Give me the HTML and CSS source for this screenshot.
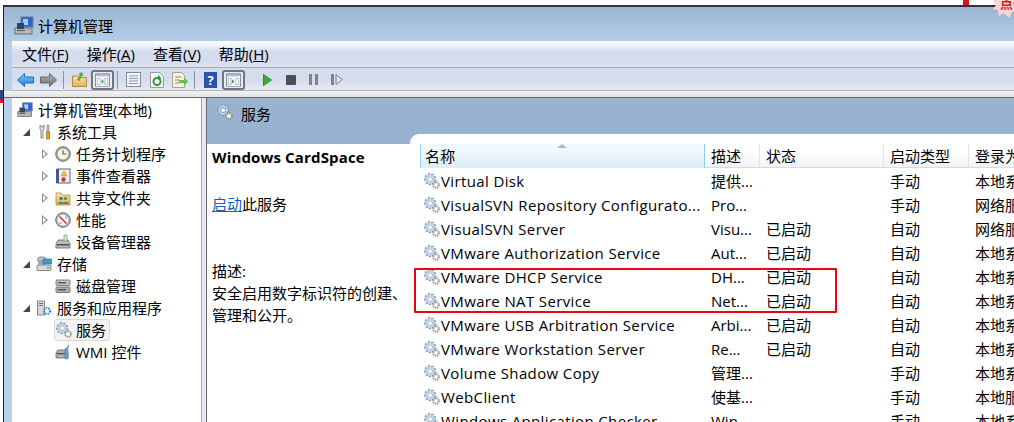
FILE: index.html
```html
<!DOCTYPE html>
<html lang="zh-CN">
<head>
<meta charset="utf-8">
<title>计算机管理</title>
<link rel="stylesheet" href="styles.css">
</head>
<body>
<svg class="defs" width="0" height="0" aria-hidden="true">
  <defs>
    <linearGradient id="gblue" x1="0" y1="0" x2="0" y2="1"><stop offset="0" stop-color="#7fd0fa"/><stop offset="1" stop-color="#1477d4"/></linearGradient>
    <linearGradient id="ggray" x1="0" y1="0" x2="0" y2="1"><stop offset="0" stop-color="#b4b4b4"/><stop offset="1" stop-color="#6f6f6f"/></linearGradient>
    <linearGradient id="gfolder" x1="0" y1="0" x2="0" y2="1"><stop offset="0" stop-color="#fbe6a8"/><stop offset="1" stop-color="#e0b35a"/></linearGradient>
    <symbol id="gear" viewBox="0 0 16 16">
      <circle cx="6.200" cy="6.200" r="4.800" fill="none" stroke="#7f97b2" stroke-width="2.600" stroke-dasharray="2 1.300"/>
      <circle cx="6.200" cy="6.200" r="3.900" fill="none" stroke="#bcd0e4" stroke-width="1.900"/>
      <circle cx="6.200" cy="6.200" r="2.300" fill="#fff" stroke="#7f93a8" stroke-width=".7"/>
      <circle cx="12" cy="12" r="2.800" fill="#fff" stroke="#85878a" stroke-width="2" stroke-dasharray="1.300 .9"/>
      <circle cx="12" cy="12" r="1" fill="#fff"/>
    </symbol>
    <symbol id="computer" viewBox="0 0 20 20">
      <rect x="7" y="1" width="12" height="10" fill="#2f62d8" stroke="#6d7f96"/>
      <rect x="9" y="3" width="5" height="6" fill="#9fd0ff"/>
      <rect x="1" y="12" width="17" height="6" fill="#b4b7ba" stroke="#6c6f73"/>
      <rect x="3" y="7" width="7" height="6" fill="#31465e"/>
      <rect x="3" y="14" width="8" height="1" fill="#54585c"/>
    </symbol>
    <symbol id="tools" viewBox="0 0 16 16">
      <path d="M4 1v4l1 1v8h2V6l1-1V1L6.500 3.500z" fill="#e9e9e9" stroke="#6f6f6f" stroke-width=".8"/>
      <path d="M11 1h2v7h-2z" fill="#c9c9c9" stroke="#777" stroke-width=".6"/>
      <path d="M10.500 8h3v7h-3z" fill="#e9a41c" stroke="#8a5a0c" stroke-width=".6"/>
    </symbol>
    <symbol id="clock" viewBox="0 0 16 16">
      <circle cx="8" cy="8" r="7.300" fill="#a9acaf" stroke="#6f7275"/>
      <circle cx="8" cy="8" r="5.300" fill="#fbf6e4"/>
      <path d="M8 4v4h3.500" fill="none" stroke="#6b6248" stroke-width="1.200"/>
    </symbol>
    <symbol id="book" viewBox="0 0 16 16">
      <rect x="2" y="1" width="13" height="14" fill="#eef0f6" stroke="#55617a"/>
      <rect x="1" y="1" width="3" height="14" fill="#4a5c84"/>
      <path d="M9 3l3 5H6z" fill="#f4c52a" stroke="#9a7a10" stroke-width=".5"/>
      <circle cx="8.500" cy="11.500" r="2.200" fill="#d2352c"/>
    </symbol>
    <symbol id="share" viewBox="0 0 16 16">
      <path d="M1 3h5l1 2h8v10H1z" fill="url(#gfolder)" stroke="#b48c3c" stroke-width=".8"/>
      <circle cx="6" cy="8.500" r="1.800" fill="#3d7fa8"/>
      <circle cx="10.500" cy="8.500" r="1.800" fill="#4f9d58"/>
      <path d="M3 14c0-3 6-3 6 0zM8 14c0-3 6-3 6 0z" fill="#4e8a76"/>
    </symbol>
    <symbol id="perf" viewBox="0 0 16 16">
      <circle cx="8" cy="8" r="7.300" fill="#b4b6b8" stroke="#6f7275"/>
      <circle cx="8" cy="8" r="5.300" fill="#fbfbfb"/>
      <path d="M4.500 4.500l7 7" stroke="#cf2a20" stroke-width="1.500"/>
      <path d="M11 4v3M4 11h3" stroke="#777" stroke-width=".8"/>
    </symbol>
    <symbol id="device" viewBox="0 0 16 16">
      <path d="M3 6h10l2 4v4H1v-4z" fill="#b9bcc0" stroke="#5f6368" stroke-width=".8"/>
      <rect x="2" y="10" width="12" height="1.500" fill="#4f5357"/>
      <rect x="9" y="1" width="3" height="6" fill="#dfe8df" stroke="#6d8a6d" stroke-width=".6"/>
    </symbol>
    <symbol id="storage" viewBox="0 0 16 16">
      <ellipse cx="6" cy="3.500" rx="4.500" ry="2.500" fill="#c4c6c8" stroke="#6b6e72" stroke-width=".8"/>
      <rect x="1" y="9" width="14" height="5.500" rx="1" fill="#d9dadb" stroke="#6b6e72" stroke-width=".8"/>
      <rect x="2" y="4" width="8" height="5" fill="#a6a9ac"/>
      <rect x="7" y="3" width="8.500" height="5" fill="#3c9bd6" stroke="#2a6f9f" stroke-width=".6"/>
      <rect x="11" y="11" width="2.500" height="1.500" fill="#58b24c"/>
    </symbol>
    <symbol id="disk" viewBox="0 0 16 16">
      <rect x="1" y="2" width="14" height="5.500" rx="1" fill="#c2c4c6" stroke="#5f6368" stroke-width=".8"/>
      <rect x="1" y="9" width="14" height="5.500" rx="1" fill="#aeb0b3" stroke="#5f6368" stroke-width=".8"/>
      <rect x="3" y="4" width="8" height="1.500" fill="#54585c"/>
      <rect x="3" y="11" width="8" height="1.500" fill="#54585c"/>
    </symbol>
    <symbol id="apps" viewBox="0 0 16 16">
      <rect x="1.500" y="1" width="7" height="14" fill="#d6d8da" stroke="#6c7075" stroke-width=".8"/>
      <path d="M3 3.500h4M3 5.500h4" stroke="#6c7075"/>
      <circle cx="11" cy="11" r="3" fill="none" stroke="#3f86c8" stroke-width="2.200" stroke-dasharray="1.500 1"/>
      <circle cx="11" cy="11" r="1" fill="#fff"/>
    </symbol>
    <symbol id="wmi" viewBox="0 0 16 16">
      <path d="M3 6h8l2 3v5H1V9z" fill="#aeb2b6" stroke="#5f6368" stroke-width=".8"/>
      <rect x="2" y="9" width="8" height="1.300" fill="#4f5357"/>
      <rect x="10" y="4" width="3" height="11" rx="1.500" fill="#5da7dc" stroke="#386f9c" stroke-width=".6"/>
      <path d="M12 4l2-3" stroke="#777" stroke-width="1.200"/>
    </symbol>
    <symbol id="panel" viewBox="0 0 20 18">
      <rect x=".5" y=".5" width="19" height="17" fill="#f6f7f9" stroke="#667080"/>
      <rect x="1" y="1" width="18" height="3" fill="#a9b8cc"/>
      <path d="M3 7h4v8H3zM13 7h4v8h-4z" fill="#fff" stroke="#7c8794" stroke-width=".7"/>
    </symbol>
  </defs>
</svg>

<div class="strip-mark"></div>
<svg class="burst" width="24" height="20" viewBox="0 0 24 20" aria-hidden="true">
  <path d="M1 0l3 5-3 4 5 1 1 6 5-3 5 5 3-6 5-1V0z" fill="#f7d6d2"/>
</svg>
<span class="burst-text">点击</span>
<div class="desk-blue"></div>
<div class="desk-red"></div>

<main class="window">
  <header class="titlebar">
    <svg class="i20"><use href="#computer"/></svg>
    <span>计算机管理</span>
  </header>

  <nav class="menubar">
    <span>文件(<u>F</u>)</span>
    <span>操作(<u>A</u>)</span>
    <span>查看(<u>V</u>)</span>
    <span>帮助(<u>H</u>)</span>
  </nav>

  <div class="toolbar">
    <span class="tb"><svg width="17" height="14" viewBox="0 0 17 14"><path d="M7.500.5v3.500h9v6h-9v3.500L.5 7z" fill="url(#gblue)" stroke="#1a6fb8"/></svg></span>
    <span class="tb"><svg width="17" height="14" viewBox="0 0 17 14"><path d="M9.500.5v3.500h-9v6h9v3.500L16.500 7z" fill="url(#ggray)" stroke="#666"/></svg></span>
    <span class="sep"></span>
    <span class="tb"><svg width="15" height="15" viewBox="0 0 15 15"><path d="M.5 4h5l1 1.500h8v9H.5z" fill="url(#gfolder)" stroke="#b48c3c"/><path d="M5 8l3-5-2-.5L10 0l1.500 4-1.500-.8L7.500 9z" fill="#4fae3a"/></svg></span>
    <span class="tb on"><svg width="15" height="14" viewBox="0 0 20 18"><use href="#panel"/><path d="M11 8v6l-3-3z" fill="#2f9a3a"/></svg></span>
    <span class="sep"></span>
    <span class="tb"><svg width="15" height="15" viewBox="0 0 15 15"><rect x=".5" y=".5" width="14" height="14" fill="#f2f4f7" stroke="#838b96"/><path d="M3 4h9M3 6.500h9M3 9h9M3 11.500h9" stroke="#8f99a6"/></svg></span>
    <span class="tb"><svg width="14" height="16" viewBox="0 0 14 16"><path d="M.5.500h9l4 4v11H.5z" fill="#f8f8f8" stroke="#9a9a9a"/><circle cx="7" cy="9.500" r="3.500" fill="none" stroke="#2e9a3c" stroke-width="2"/><path d="M8 3l3.500 3L8 8z" fill="#2e9a3c"/></svg></span>
    <span class="tb"><svg width="16" height="16" viewBox="0 0 16 16"><path d="M.5.500h9l3 3v12H.5z" fill="#f6f2dc" stroke="#a5a08a"/><path d="M3 5h6M3 8h4M3 11h4" stroke="#8d8a78"/><path d="M7 8h5V5l4 4.500-4 4.500v-3H7z" fill="#6bbb4f"/></svg></span>
    <span class="sep"></span>
    <span class="tb"><span class="help">?</span></span>
    <span class="tb on"><svg width="15" height="14" viewBox="0 0 20 18"><use href="#panel"/><path d="M8 8v6l3-3z" fill="#2f9a3a"/></svg></span>
    <span class="sep wide"></span>
    <span class="tb"><svg width="9" height="12" viewBox="0 0 9 12"><path d="M.5.500L8.500 6 .5 11.500z" fill="#3cab35" stroke="#2a8a28"/></svg></span>
    <span class="tb"><span class="stop"></span></span>
    <span class="tb"><svg width="9" height="11" viewBox="0 0 9 11"><path d="M0 0h3v11H0zM6 0h3v11H6z" fill="#7f8387"/></svg></span>
    <span class="tb"><svg width="12" height="11" viewBox="0 0 12 11"><path d="M0 0h3v11H0z" fill="#7f8387"/><path d="M5 .500L11.500 5.500 5 10.500z" fill="#dfe1e3" stroke="#7f8387"/></svg></span>
  </div>
  <div class="rule"></div>

  <div class="content">
    <aside class="tree">
      <div class="node lv0"><svg class="i16"><use href="#computer"/></svg>计算机管理(本地)</div>
      <div class="node lv1"><i class="tw open"></i><svg class="i16"><use href="#tools"/></svg>系统工具</div>
      <div class="node lv2"><i class="tw"></i><svg class="i16"><use href="#clock"/></svg>任务计划程序</div>
      <div class="node lv2"><i class="tw"></i><svg class="i16"><use href="#book"/></svg>事件查看器</div>
      <div class="node lv2"><i class="tw"></i><svg class="i16"><use href="#share"/></svg>共享文件夹</div>
      <div class="node lv2"><i class="tw"></i><svg class="i16"><use href="#perf"/></svg>性能</div>
      <div class="node lv2"><i class="tw none"></i><svg class="i16"><use href="#device"/></svg>设备管理器</div>
      <div class="node lv1"><i class="tw open"></i><svg class="i16"><use href="#storage"/></svg>存储</div>
      <div class="node lv2"><i class="tw none"></i><svg class="i16"><use href="#disk"/></svg>磁盘管理</div>
      <div class="node lv1"><i class="tw open"></i><svg class="i16"><use href="#apps"/></svg>服务和应用程序</div>
      <div class="node lv2"><i class="tw none"></i><span class="picked"><svg class="i16"><use href="#gear"/></svg>服务</span></div>
      <div class="node lv2"><i class="tw none"></i><svg class="i16"><use href="#wmi"/></svg>WMI 控件</div>
    </aside>

    <section class="pane">
      <div class="pane-head"><svg class="i16"><use href="#gear"/></svg><span>服务</span></div>
      <div class="pane-body">
        <div class="detail">
          <h1>Windows CardSpace</h1>
          <p class="action"><a href="#">启动</a>此服务</p>
          <p class="desc">描述:<br>安全启用数字标识符的创建、<br>管理和公开。</p>
        </div>
        <div class="list">
          <div class="row head">
            <span class="sorted">名称<i class="sort"></i></span><span>描述</span><span>状态</span><span>启动类型</span><span>登录为</span>
          </div>
          <div class="row"><span><svg class="i16"><use href="#gear"/></svg>Virtual Disk</span><span>提供...</span><span></span><span>手动</span><span>本地系统</span></div>
          <div class="row"><span><svg class="i16"><use href="#gear"/></svg>VisualSVN Repository Configurato...</span><span>Pro...</span><span></span><span>手动</span><span>网络服务</span></div>
          <div class="row"><span><svg class="i16"><use href="#gear"/></svg>VisualSVN Server</span><span>Visu...</span><span>已启动</span><span>自动</span><span>网络服务</span></div>
          <div class="row"><span><svg class="i16"><use href="#gear"/></svg>VMware Authorization Service</span><span>Aut...</span><span>已启动</span><span>自动</span><span>本地系统</span></div>
          <div class="row"><span><svg class="i16"><use href="#gear"/></svg>VMware DHCP Service</span><span>DH...</span><span>已启动</span><span>自动</span><span>本地系统</span></div>
          <div class="row"><span><svg class="i16"><use href="#gear"/></svg>VMware NAT Service</span><span>Net...</span><span>已启动</span><span>自动</span><span>本地系统</span></div>
          <div class="row"><span><svg class="i16"><use href="#gear"/></svg>VMware USB Arbitration Service</span><span>Arbi...</span><span>已启动</span><span>自动</span><span>本地系统</span></div>
          <div class="row"><span><svg class="i16"><use href="#gear"/></svg>VMware Workstation Server</span><span>Re...</span><span>已启动</span><span>自动</span><span>本地系统</span></div>
          <div class="row"><span><svg class="i16"><use href="#gear"/></svg>Volume Shadow Copy</span><span>管理...</span><span></span><span>手动</span><span>本地系统</span></div>
          <div class="row"><span><svg class="i16"><use href="#gear"/></svg>WebClient</span><span>使基...</span><span></span><span>手动</span><span>本地服务</span></div>
          <div class="row"><span><svg class="i16"><use href="#gear"/></svg>Windows Application Checker</span><span>Win...</span><span></span><span>手动</span><span>本地系统</span></div>
        </div>
      </div>
    </section>
  </div>
</main>
<div class="callout"></div>
</body>
</html>
```
FILE: styles.css
```css
* { box-sizing: border-box; }
html, body { margin: 0; height: 422px; overflow: hidden; background: #fff; }
body {
  position: relative;
  padding: 5px 0 0 3px;
  font: 15px/22px "Open Sans", "Noto Sans CJK SC", sans-serif;
  color: #000;
}
.defs { position: absolute; }
svg { display: block; flex: none; }

.strip-mark { position: absolute; left: 963px; top: 0; width: 6px; height: 5px; background: #d4151c; }
.burst { position: absolute; left: 992px; top: 0; z-index: 2; }
.burst-text { position: absolute; left: 1000px; top: -4px; z-index: 3; font-size: 13px; line-height: 14px; font-weight: 700; color: #d21d1d; white-space: nowrap; }
.desk-blue { position: absolute; left: 0; top: 90px; width: 3px; height: 10px; background: #2c4a86; }
.desk-red { position: absolute; left: 0; top: 100px; width: 3px; height: 3px; background: #e8141c; }

.window {
  width: 1060px;
  height: 417px;
  border-left: 1px solid #222;
  border-top: 2px solid #333;
  background: #bad0e8;
  padding-left: 8px;
  display: flex;
  flex-direction: column;
}

.titlebar {
  height: 34px;
  margin-left: -8px;
  padding: 4px 0 0 10px;
  display: flex;
  align-items: center;
  gap: 4px;
  background: linear-gradient(#9ab4d1, #b3cee8);
}
.i20 { width: 20px; height: 20px; }
.i16 { width: 16px; height: 16px; }

.menubar {
  height: 27px;
  display: flex;
  gap: 18px;
  padding: 0 0 0 10px;
  align-items: center;
  background: linear-gradient(#fff 0, #f3f5fa 4px, #d5dcee 10px, #d5dcee 20px, #dfe4f2 26px);
  border-bottom: 1px solid #a9abb3;
}

.toolbar {
  height: 23px;
  display: flex;
  align-items: center;
  padding: 1px 0 0 2px;
  background: linear-gradient(#d5dcee, #d5dcee 55%, #e6eaf5);
  border-bottom: 1px solid #b0b2ba;
}
.tb { width: 23px; height: 21px; flex: none; display: flex; align-items: center; justify-content: center; }
.tb.on { height: 20px; border: 2px solid #6f7682; border-radius: 3px; background: #e9ecf4; }
.sep { width: 1px; height: 18px; flex: none; margin: 0 4px 0 3px; background: #8d939c; }
.sep.wide { background: transparent; margin: 0 5px; }
.help { width: 13px; height: 16px; background: #2b53ad; color: #fff; font-size: 13px; font-weight: 700; line-height: 16px; text-align: center; }
.stop { width: 10px; height: 10px; border-radius: 1px; background: #4c4f52; }

.rule { height: 7px; background: linear-gradient(#f2f2f2, #e4e4e4); border-bottom: 1px solid #666; margin-left: -8px; }

.content { flex: 1; display: flex; gap: 4px; min-height: 0; background: #e6e8ec; }

.tree {
  width: 190px;
  flex: none;
  background: #fff;
  border-right: 1px solid #a5a8ad;
  padding-top: 1px;
}
.node { height: 22px; display: flex; align-items: center; white-space: nowrap; gap: 5px; }
.lv0 { padding-left: 5px; }
.lv1 { padding-left: 10px; }
.lv2 { padding-left: 29px; }
.tw { width: 9px; flex: none; height: 10px; position: relative; }
.tw::before {
  content: "";
  position: absolute;
  left: 1px;
  top: 0;
  border-left: 6px solid #8a8f94;
  border-top: 5px solid transparent;
  border-bottom: 5px solid transparent;
}
.tw::after {
  content: "";
  position: absolute;
  left: 2px;
  top: 2px;
  border-left: 3px solid #fff;
  border-top: 3px solid transparent;
  border-bottom: 3px solid transparent;
}
.tw.open::before {
  left: 1px;
  top: 2px;
  border: 0;
  border-bottom: 7px solid #444;
  border-left: 7px solid transparent;
}
.tw.open::after, .tw.none::before, .tw.none::after { display: none; }
.picked {
  display: flex;
  align-items: center;
  gap: 4px;
  height: 22px;
  margin-left: -1px;
  padding: 0 3px 0 1px;
  background: #f3f3f3;
  border: 1px solid #d9d9d9;
  border-radius: 3px;
}

.pane { flex: 1; min-width: 0; display: flex; flex-direction: column; background: #fff; border-left: 1px solid #667; }
.pane-head {
  height: 46px;
  flex: none;
  background: #98b2cf;
  display: flex;
  align-items: flex-start;
  gap: 8px;
  padding: 5px 0 0 10px;
}
.pane-head svg { margin-top: 1px; }
.pane-body { flex: 1; display: flex; min-height: 0; }
.detail { width: 213px; flex: none; padding: 2px 0 0 5px; }
.detail h1 { margin: 0; font-size: 15px; line-height: 22px; font-weight: 700; white-space: nowrap; letter-spacing: .15px; }
.detail p { margin: 0; }
.action { padding-top: 25px; }
.action a { color: #0f62b8; text-decoration: underline; }
.desc { padding-top: 45px; }

.list { flex: 1; min-width: 0; margin: -10px 0 0 -10px; padding: 10px 0 0 10px; background: #fff; border-radius: 9px 0 0 0; }
.row {
  display: grid;
  grid-template-columns: 285px 55px 124px 85px 1fr;
  height: 24px;
  align-items: center;
  white-space: nowrap;
}
.row > span { overflow: hidden; padding-left: 6px; display: flex; align-items: center; gap: 1px; }
.row > span:first-child { padding-left: 4px; letter-spacing: .37px; }
.head { margin-bottom: 1px; border-bottom: 1px solid #d8dadd; background: linear-gradient(#fff, #fff 35%, #f0f2f5); }
.head > span { height: 24px; border-right: 1px solid #e1e3e6; }
.head > .sorted {
  position: relative;
  padding-left: 6px;
  letter-spacing: 0;
  background: linear-gradient(#f2f9fd, #f2f9fd 30%, #d9ecf8);
  border-left: 1px solid #a4cfe8;
  border-right: 1px solid #8fcdf0;
}
.sort {
  position: absolute;
  left: 136px;
  top: 0;
  border-left: 5px solid transparent;
  border-right: 5px solid transparent;
  border-bottom: 4px solid #a6bfd6;
}

.callout {
  position: absolute;
  left: 414px;
  top: 268px;
  width: 423px;
  height: 45px;
  border: 2px solid #e8080f;
  border-radius: 1px;
  z-index: 4;
}
```
